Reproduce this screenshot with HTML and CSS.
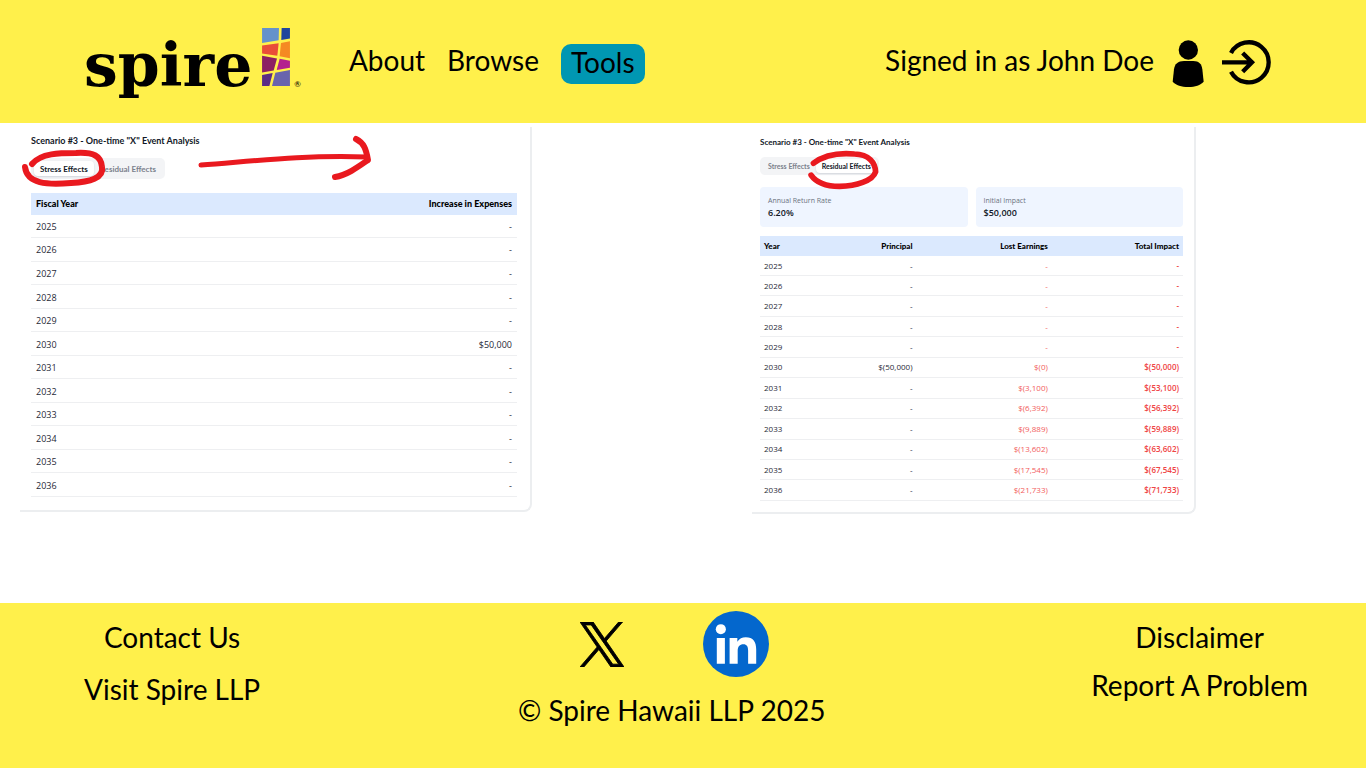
FILE: index.html
```html
<!DOCTYPE html>
<html lang="en">
<head>
<meta charset="utf-8">
<meta name="viewport" content="width=device-width, initial-scale=1">
<title>Spire Hawaii LLP - Tools</title>
<link rel="stylesheet" href="styles.css">
</head>
<body>
<header class="site-header">
  <a class="logo" href="#" aria-label="Spire home">
    <span class="logo-word">spire</span>
    <svg class="logo-mark" viewBox="574 39 84 175" aria-hidden="true">
      <path fill="#6592cb" d="M574 39h51l-1 37-50 8z"/>
      <path fill="#20459c" d="M633 39h25v32l-26 4z"/>
      <path fill="#e94e38" d="M574 92l50-7-4 38-46-7z"/>
      <path fill="#f58a22" d="M631 84l27-5v51l-31-6z"/>
      <path fill="#8c1f63" d="M574 123l45 8-10 36-35 6z"/>
      <path fill="#b41f8e" d="M627 132l31 6v21l-40 7z"/>
      <path fill="#5b2c86" d="M574 181l32-6-10 39h-22z"/>
      <path fill="#6964ad" d="M614 174l44-8v48h-54z"/>
    </svg>
    <span class="logo-reg">®</span>
  </a>
  <nav class="main-nav">
    <a href="#">About</a>
    <a href="#">Browse</a>
    <a class="current" href="#" aria-current="page">Tools</a>
  </nav>
  <div class="account">
    <span>Signed in as John Doe</span>
    <a class="icon-link" href="#" aria-label="Profile">
      <svg class="icon-user" viewBox="936 30 96 141" aria-hidden="true"><circle cx="985" cy="60" r="29"/><path d="M972 93h28c17 0 25 9 27 25l4 37c-10 10-25 16-46 16s-37-6-47-16l4-37c2-16 12-25 30-25z"/></svg>
    </a>
    <button class="icon-button" type="button" aria-label="Sign out">
      <svg class="icon-exit" viewBox="1086 33 147 133" aria-hidden="true"><g fill="none" stroke="#000" stroke-width="13"><path d="M1113 71a60 60 0 1 1 0 56"/><path d="M1086 99h90M1148 71l28 28-28 28"/></g></svg>
    </button>
  </div>
</header>

<main class="panels">
  <section class="card card-stress">
    <h2>Scenario #3 - One-time "X" Event Analysis</h2>
    <div class="tabs">
      <button class="tab active" type="button">Stress Effects</button>
      <button class="tab" type="button">Residual Effects</button>
    </div>
    <table>
      <thead><tr><th>Fiscal Year</th><th>Increase in Expenses</th></tr></thead>
      <tbody>
        <tr><td>2025</td><td>-</td></tr>
        <tr><td>2026</td><td>-</td></tr>
        <tr><td>2027</td><td>-</td></tr>
        <tr><td>2028</td><td>-</td></tr>
        <tr><td>2029</td><td>-</td></tr>
        <tr><td>2030</td><td>$50,000</td></tr>
        <tr><td>2031</td><td>-</td></tr>
        <tr><td>2032</td><td>-</td></tr>
        <tr><td>2033</td><td>-</td></tr>
        <tr><td>2034</td><td>-</td></tr>
        <tr><td>2035</td><td>-</td></tr>
        <tr><td>2036</td><td>-</td></tr>
      </tbody>
    </table>
    <svg class="marks marks-stress" viewBox="0 0 380 100" aria-hidden="true">
      <g fill="none" stroke="#e9191f" stroke-width="6" stroke-linecap="round" stroke-linejoin="round">
        <path d="M22 40C31 29 50 29 66 29C84 28 91 32 92 43C94 54 80 58 61 59C37 61 17 60 15 43"/>
        <path stroke-width="5" d="M191 41C245 37 290 31 357 33"/>
        <path d="M346 15C354 19 356 25 358 36C348 43 337 51 325 53"/>
      </g>
    </svg>
  </section>

  <section class="card card-residual">
    <h2>Scenario #3 - One-time "X" Event Analysis</h2>
    <div class="tabs">
      <button class="tab" type="button">Stress Effects</button>
      <button class="tab active" type="button">Residual Effects</button>
    </div>
    <dl class="stats">
      <div><dt>Annual Return Rate</dt><dd>6.20%</dd></div>
      <div><dt>Initial Impact</dt><dd>$50,000</dd></div>
    </dl>
    <table>
      <thead><tr><th>Year</th><th>Principal</th><th>Lost Earnings</th><th>Total Impact</th></tr></thead>
      <tbody>
        <tr><td>2025</td><td>-</td><td>-</td><td>-</td></tr>
        <tr><td>2026</td><td>-</td><td>-</td><td>-</td></tr>
        <tr><td>2027</td><td>-</td><td>-</td><td>-</td></tr>
        <tr><td>2028</td><td>-</td><td>-</td><td>-</td></tr>
        <tr><td>2029</td><td>-</td><td>-</td><td>-</td></tr>
        <tr><td>2030</td><td>$(50,000)</td><td>$(0)</td><td>$(50,000)</td></tr>
        <tr><td>2031</td><td>-</td><td>$(3,100)</td><td>$(53,100)</td></tr>
        <tr><td>2032</td><td>-</td><td>$(6,392)</td><td>$(56,392)</td></tr>
        <tr><td>2033</td><td>-</td><td>$(9,889)</td><td>$(59,889)</td></tr>
        <tr><td>2034</td><td>-</td><td>$(13,602)</td><td>$(63,602)</td></tr>
        <tr><td>2035</td><td>-</td><td>$(17,545)</td><td>$(67,545)</td></tr>
        <tr><td>2036</td><td>-</td><td>$(21,733)</td><td>$(71,733)</td></tr>
      </tbody>
    </table>
    <svg class="marks marks-residual" viewBox="200 70 230 130" aria-hidden="true">
      <path fill="none" stroke="#e9191f" stroke-width="17" stroke-linecap="round" stroke-linejoin="round" d="M221 116C255 90 300 84 345 88C390 89 408 115 409 142C400 170 350 184 300 186C255 186 230 175 214 152"/>
    </svg>
  </section>
</main>

<footer class="site-footer">
  <nav class="footer-links contact">
    <a href="#">Contact Us</a>
    <a href="#">Visit Spire LLP</a>
  </nav>
  <div class="footer-middle">
    <div class="social">
      <a href="#" aria-label="X"><svg class="icon-x" viewBox="0 0 1200 1227" aria-hidden="true"><path stroke="#000" stroke-width="24" d="M714.163 519.284L1160.89 0H1055.03L667.137 450.887L357.328 0H0L468.492 681.821L0 1226.37H105.866L515.491 750.218L842.672 1226.37H1200L714.137 519.284H714.163ZM569.165 687.828L521.697 619.934L144.011 79.6944H306.615L611.412 515.685L658.88 583.579L1055.08 1150.3H892.476L569.165 687.854V687.828Z"/></svg></a>
      <a href="#" aria-label="LinkedIn"><svg class="icon-linkedin" viewBox="0 0 196 196" aria-hidden="true"><circle cx="98" cy="98" r="98" fill="#0467cd"/><g fill="#fff"><circle cx="53" cy="54" r="15"/><path d="M41 80h24v77H41zM79 80h23v11c6-9 14-13 25-13 22 0 31 13 31 36v43h-24v-39c0-12-4-19-14-19-11 0-17 7-17 19v39H79z"/></g></svg></a>
    </div>
    <p>© Spire Hawaii LLP 2025</p>
  </div>
  <nav class="footer-links legal">
    <a href="#">Disclaimer</a>
    <a href="#">Report A Problem</a>
  </nav>
</footer>
</body>
</html>
```
FILE: styles.css
```css
* { box-sizing: border-box; }

body {
  margin: 0;
  min-height: 100vh;
  display: flex;
  flex-direction: column;
  background: #fff;
  color: #000;
  font-family: Lato, sans-serif;
  font-size: 28px;
  line-height: 36px;
}

a { color: inherit; text-decoration: none; }
button { font: inherit; color: inherit; border: 0; padding: 0; background: none; cursor: pointer; }
svg { display: block; }

/* Header */
.site-header {
  display: flex;
  align-items: flex-start;
  padding: 28px 95px 0 84px;
  min-height: 123px;
  background: #fff04b;
}
.logo { display: flex; align-items: flex-start; }
.logo-word {
  font-family: "DejaVu Serif", serif;
  font-weight: 700;
  font-size: 60px;
  line-height: 74px;
}
.logo-mark { width: 28px; height: 58px; margin-left: 10px; }
.logo-reg { font-size: 8px; line-height: 10px; margin: 51px 0 0 4px; }

.main-nav { display: flex; gap: 22px; margin: 15px 0 0 48px; }
.main-nav a { line-height: 34px; }
.main-nav .current {
  height: 40px;
  margin-top: 1px;
  padding: 1px 10px 0;
  border-radius: 10px;
  background: #0097b2;
}

.account { display: flex; align-items: flex-start; gap: 18px; margin: 12px 0 0 auto; }
.account span { margin-top: 3px; line-height: 34px; }
.icon-user { width: 32px; height: 47px; }
.icon-exit { width: 49px; height: 45px; }

/* Scenario cards */
.panels {
  flex: 1;
  display: flex;
  justify-content: space-between;
  align-items: flex-start;
  padding: 4px 170px 88px 20px;
  font-family: "Open Sans", "Noto Sans", sans-serif;
}
.card {
  position: relative;
  border: solid #eceef0;
  border-width: 0 2px 2px 0;
  border-bottom-right-radius: 8px;
  color: #1f2937;
}
.card h2, .card th, .tab { font-family: Lato, sans-serif; }
.card h2 { margin: 0; font-weight: 700; color: #111827; }
.tabs { display: inline-flex; background: #f3f4f6; border-radius: 5px; }
.tab { color: #7b818c; font-weight: 700; border-radius: 4px; }
.tab.active { background: #fff; color: #111827; box-shadow: 0 1px 2px #d1d5db; }

.card table { width: 100%; border-collapse: collapse; table-layout: fixed; }
.card th { background: #dbe9fe; color: #000; font-weight: 900; }
.card th, .card td { padding: 0 4px; text-align: right; }
.card th:first-child, .card td:first-child { text-align: left; }
.card tbody tr { border-bottom: 1px solid #eeeff1; }

.card-stress { flex: 0 1 512px; padding: 6px 13px 13px 11px; font-size: 9px; line-height: 12px; }
.card-stress h2 { font-size: 9px; line-height: 16px; }
.card-stress .tabs { margin-top: 9px; padding: 3px; height: 21px; }
.card-stress .tab { padding: 0 6px; font-size: 8px; }
.card-stress table { margin-top: 14px; height: 304px; }
.card-stress th { height: 22px; padding: 0 5px; }
.card-stress td { padding: 2px 5px 0; }

.card-residual { flex: 0 1 444px; padding: 7px 11px 11px 8px; font-size: 8px; line-height: 10px; }
.card-residual h2 { font-size: 8px; line-height: 16px; }
.card-residual .tabs { margin-top: 7px; padding: 2px; height: 18px; }
.card-residual .tab { padding: 0 6px; font-size: 7px; }
.stats { display: grid; grid-template-columns: 1fr 1fr; gap: 8px; margin: 12px 0 9px; }
.stats div { height: 40px; padding: 9px 8px; background: #eff5ff; border-radius: 4px; }
.stats dt { font-size: 7px; color: #6b7280; }
.stats dd { margin: 2px 0 0; font-size: 9px; font-weight: 600; color: #111827; }
.card-residual table { height: 265px; }
.card-residual th { height: 20px; }
.card-residual th:nth-child(1) { width: 14%; }
.card-residual th:nth-child(2) { width: 23%; }
.card-residual th:nth-child(3) { width: 32%; }
.card-residual td:nth-child(3) { color: #f25c5c; }
.card-residual td:nth-child(4) { color: #ef4444; font-weight: 600; }

/* Hand-drawn marks over the cards */
.marks { position: absolute; pointer-events: none; }
.marks-stress { left: -10px; top: -3px; width: 380px; height: 100px; }
.marks-residual { left: 54px; top: 21px; width: 77px; height: 43px; }

/* Footer */
.site-footer {
  display: flex;
  justify-content: space-between;
  align-items: flex-start;
  padding: 8px 58px 0 84px;
  min-height: 165px;
  background: #fff04b;
}
.footer-links { display: flex; flex-direction: column; align-items: center; padding-top: 8px; }
.contact { gap: 16px; }
.legal { gap: 12px; }
.footer-middle { display: flex; flex-direction: column; align-items: center; margin-right: 8px; }
.social { display: flex; align-items: center; gap: 79px; padding-left: 6px; }
.icon-x { width: 44px; height: 45px; }
.icon-linkedin { width: 66px; height: 66px; }
.footer-middle p { margin: 15px 0 0; }
```
